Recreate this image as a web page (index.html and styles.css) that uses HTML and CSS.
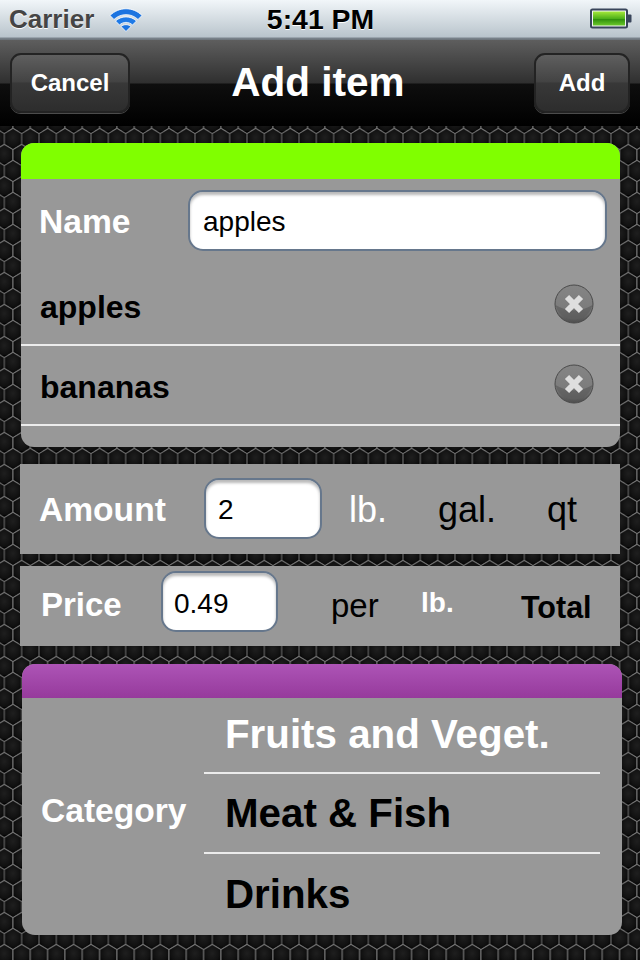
FILE: index.html
```html
<!DOCTYPE html>
<html lang="en">
<head>
<meta charset="utf-8">
<title>Add item</title>
<link rel="stylesheet" href="styles.css">
</head>
<body>
<div class="screen">
  <header class="status">
    <div class="status-left">
      <span class="carrier">Carrier</span>
      <svg class="wifi" width="34" height="26" viewBox="0 0 34 26">
        <path d="M1 9.500C10 .5 24 .5 33 9.500L29 13.500C22.500 7 11.500 7 5 13.500Z" fill="#1c74e0" stroke="#fff" stroke-width=".8"/>
        <path d="M6.500 15C12.500 9.500 21.500 9.500 27.500 15L23.500 19C20 15.500 14 15.500 10.500 19Z" fill="#1f7ae6" stroke="#fff" stroke-width=".8"/>
        <path d="M12 20.500C15 18 19 18 22 20.500L17 25.500Z" fill="#1c74e0" stroke="#fff" stroke-width=".8"/>
      </svg>
    </div>
    <span class="clock">5:41 PM</span>
    <div class="status-right">
      <svg class="battery" width="42" height="22" viewBox="0 0 42 22">
        <defs>
          <linearGradient id="batt" x1="0" y1="0" x2="0" y2="1">
            <stop offset="0" stop-color="#a4e83a"/>
            <stop offset=".5" stop-color="#4fb01a"/>
            <stop offset=".55" stop-color="#2f8f0c"/>
            <stop offset="1" stop-color="#6bc82a"/>
          </linearGradient>
        </defs>
        <rect x="1" y="1.500" width="36" height="18" rx="1.500" fill="#f4f6f8" stroke="#39455a" stroke-width="2"/>
        <rect x="3" y="3.500" width="32" height="14" fill="url(#batt)"/>
        <path d="M38 6.500h2.500a1 1 0 0 1 1 1v6a1 1 0 0 1-1 1H38Z" fill="#39455a"/>
      </svg>
    </div>
  </header>

  <nav class="navbar">
    <div class="nav-left"><span class="nav-btn nav-cancel">Cancel</span></div>
    <h1 class="nav-title">Add item</h1>
    <div class="nav-right"><span class="nav-btn nav-add">Add</span></div>
  </nav>

  <main class="content">
    <svg class="mesh" width="640" height="834" aria-hidden="true">
      <defs>
        <radialGradient id="cell" cx=".5" cy=".42" r=".6">
          <stop offset="0" stop-color="#1f1f1f"/>
          <stop offset=".65" stop-color="#111"/>
          <stop offset="1" stop-color="#030303"/>
        </radialGradient>
        <pattern id="hex" x="4.33" y="-123" width="17.333" height="32" patternUnits="userSpaceOnUse">
          <rect width="17.333" height="32" fill="#030303"/>
          <g fill="url(#cell)" stroke="#787878" stroke-width="1">
            <polygon points="8.667,-2.67 17.333,2.67 17.333,13.33 8.667,18.67 0,13.33 0,2.67"/>
            <polygon points="0,13.33 8.667,18.67 8.667,29.33 0,34.67 -8.667,29.33 -8.667,18.67"/>
            <polygon points="17.333,13.33 26,18.67 26,29.33 17.333,34.67 8.667,29.33 8.667,18.67"/>
            <polygon points="8.667,29.33 17.333,34.67 17.333,45.33 8.667,50.67 0,45.33 0,34.67"/>
          </g>
        </pattern>
      </defs>
      <rect width="640" height="834" fill="url(#hex)"/>
    </svg>

    <section class="panel panel-item">
      <div class="panel-head head-green"></div>
      <div class="name-row">
        <span class="label label-name">Name</span>
        <div class="field field-name">apples</div>
      </div>
      <div class="suggest">
        <span class="suggest-text">apples</span>
        <svg class="del" width="42" height="42" viewBox="0 0 42 42">
          <defs>
            <linearGradient id="delg" x1="0" y1="0" x2="0" y2="1">
              <stop offset="0" stop-color="#858585"/>
              <stop offset=".6" stop-color="#7c7c7c"/>
              <stop offset="1" stop-color="#4e4e4e"/>
            </linearGradient>
          </defs>
          <circle cx="21" cy="21" r="19" fill="url(#delg)" stroke="#4a4a4a" stroke-width="1"/>
          <path d="M2.500 22Q21 33 39.500 22A19 19 0 0 1 2.500 22Z" fill="#5f5f5f" opacity=".75"/>
          <path d="M14 14L28 28M28 14L14 28" stroke="#dedede" stroke-width="6"/>
        </svg>
      </div>
      <div class="suggest">
        <span class="suggest-text">bananas</span>
        <svg class="del" width="42" height="42" viewBox="0 0 42 42">
          <circle cx="21" cy="21" r="19" fill="url(#delg)" stroke="#4a4a4a" stroke-width="1"/>
          <path d="M2.500 22Q21 33 39.500 22A19 19 0 0 1 2.500 22Z" fill="#5f5f5f" opacity=".75"/>
          <path d="M14 14L28 28M28 14L14 28" stroke="#dedede" stroke-width="6"/>
        </svg>
      </div>
    </section>

    <section class="panel panel-amount">
      <span class="label label-amount">Amount</span>
      <div class="field field-small field-amount">2</div>
      <div class="units">
        <span class="unit unit-on">lb.</span>
        <span class="unit">gal.</span>
        <span class="unit">qt</span>
      </div>
    </section>

    <section class="panel panel-price">
      <span class="label label-price">Price</span>
      <div class="field field-small field-price">0.49</div>
      <span class="per">per</span>
      <span class="per-unit">lb.</span>
      <span class="total">Total</span>
    </section>

    <section class="panel panel-cat">
      <div class="panel-head head-purple"></div>
      <div class="cat-body">
        <span class="label label-cat">Category</span>
        <ul class="cat-list">
          <li class="cat-item cat-first cat-on">Fruits and Veget.</li>
          <li class="cat-item cat-mid">Meat &amp; Fish</li>
          <li class="cat-item cat-last">Drinks</li>
        </ul>
      </div>
    </section>
  </main>
</div>
</body>
</html>
```
FILE: styles.css
```css
* { box-sizing: border-box; }
html, body { margin: 0; padding: 0; background: #000; }
body { font-family: "Liberation Sans", Arial, sans-serif; }
.screen { width: 640px; height: 960px; overflow: hidden; display: flex; flex-direction: column; }

.status {
  height: 40px; flex: none;
  display: grid; grid-template-columns: 1fr auto 1fr; align-items: center;
  background: linear-gradient(#f1f6f9 0, #b9c4cc 37px, #7b858e 38px, #6c747a 40px);
  padding: 0 8px 2px 9px;
}
.status-left { display: flex; align-items: center; }
.carrier { font-size: 26px; font-weight: 700; color: #454545; text-shadow: 0 1px 0 #fff; }
.wifi { margin-left: 15px; }
.clock { font-size: 28.4px; font-weight: 700; color: #000; text-shadow: 0 1px 0 #fff; }
.status-right { display: flex; justify-content: flex-end; }
.battery { display: block; }

.navbar {
  height: 86px; flex: none;
  display: grid; grid-template-columns: 1fr auto 1fr; align-items: center;
  padding: 0 10px 0;
  background: linear-gradient(#5e5e5e 0, #2f2f2f 43px, #0e0e0e 44px, #000 86px);
}
.nav-right { display: flex; justify-content: flex-end; }
.nav-left { display: flex; }
.nav-title { margin: 0 4px 2px 0; font-size: 40.5px; font-weight: 700; color: #fff; line-height: 46px; }
.nav-btn {
  height: 60px; display: flex; align-items: center; justify-content: center;
  font-size: 24px; font-weight: 700; color: #fff;
  border: 2px solid #232323; border-radius: 11px;
  background: linear-gradient(#5f5f5f 0, #434343 48%, #383838 50%, #2d2d2d 100%);
  box-shadow: 0 1px 0 #4c4c4c;
  margin-top: -1px;
}
.nav-cancel { width: 120px; }
.nav-add { width: 96px; }

.content { position: relative; flex: 1; padding-top: 17px; }
.mesh { position: absolute; left: 0; top: 0; display: block; }

.panel { position: relative; background: #989898; }
.label { font-size: 33.6px; font-weight: 700; color: #fff; }

.panel-item { margin-left: 21px; width: 599px; height: 304px; border-radius: 13px; overflow: hidden; }
.head-green { height: 36px; background: #80ff00; }
.head-purple { height: 34px; background: linear-gradient(#ad54b6, #963a9c); }

.name-row { height: 87px; display: flex; align-items: flex-start; padding: 11px 0 0 18px; }
.label-name { width: 149px; padding-top: 13px; line-height: 38px; }
.field {
  display: flex; align-items: center;
  background: #fff; color: #000; font-size: 28px;
  border: 2px solid #66778c; border-radius: 15px;
  box-shadow: inset 0 3px 3px rgba(0,0,0,.28);
}
.field-name { width: 419px; height: 61px; padding: 2px 0 0 13px; }

.suggest {
  height: 80px; display: flex; align-items: center; justify-content: space-between;
  padding: 0 25px 3px 19px; border-bottom: 2px solid #ececec;
}
.suggest-text { font-size: 32px; font-weight: 700; color: #000; margin-top: 7px; }
.del { display: block; }

.panel-amount {
  margin-top: 17px; margin-left: 20px; width: 600px; height: 90px;
  display: flex; align-items: center; padding-left: 19px;
}
.label-amount { width: 165px; margin-top: 2px; }
.field-small { width: 118px; height: 61px; padding-left: 12px; flex: none; }
.field-amount { margin-top: -2px; padding-top: 4px; }
.units { display: grid; grid-template-columns: 89px 109px auto; margin-left: 27px; margin-top: 2px; }
.unit { font-size: 36px; color: #000; }
.unit-on { color: #fff; }

.panel-price {
  margin-top: 12px; margin-left: 20px; width: 600px; height: 80px;
  display: flex; align-items: center; padding-left: 21px;
}
.label-price { width: 120px; font-size: 33px; margin-bottom: 2px; }
.field-price { width: 117px; margin-bottom: 9px; padding: 4px 0 0 11px; }
.per { width: 90px; margin-left: 53px; font-size: 33px; color: #000; }
.per-unit { width: 100px; font-size: 28px; font-weight: 700; color: #fff; margin-bottom: 6px; }
.total { font-size: 30.5px; font-weight: 700; color: #000; margin-top: 2px; }

.panel-cat { margin-top: 18px; margin-left: 22px; width: 600px; height: 271px; border-radius: 13px; overflow: hidden; }
.cat-body { height: 237px; display: flex; align-items: center; padding-left: 19px; }
.label-cat { width: 163px; margin-bottom: 12px; }
.cat-list { list-style: none; margin: 0; padding: 0; width: 396px; align-self: flex-start; }
.cat-item {
  height: 80px; display: flex; align-items: center; padding-left: 21px;
  font-size: 40.3px; font-weight: 700; color: #000;
  border-bottom: 2px solid #ececec;
}
.cat-first { height: 76px; }
.cat-mid { padding-top: 2px; }
.cat-on { color: #fff; }
.cat-last { border-bottom: 0; height: 81px; }
```
